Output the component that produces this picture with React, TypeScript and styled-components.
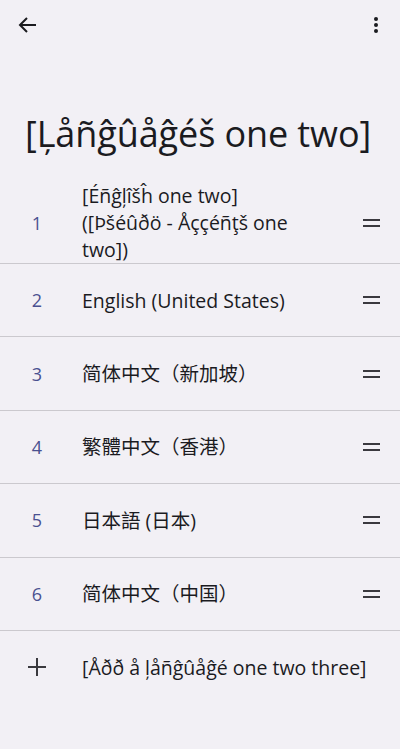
import React from 'react';
import styled, { createGlobalStyle } from 'styled-components';

const GlobalStyle = createGlobalStyle`
  html, body {
    margin: 0;
    padding: 0;
    background: #f2f0f5;
  }
  body {
    font-family: "Open Sans", "Noto Sans CJK SC", sans-serif;
    color: #1b1b1f;
  }
`;

const Page = styled.div`
  width: 400px;
  min-height: 749px;
  background: #f2f0f5;
  display: flex;
  flex-direction: column;
`;

const TopBar = styled.div`
  height: 50px;
  display: flex;
  align-items: center;
  justify-content: space-between;
  padding: 0 12px 0 16px;
`;

const IconButton = styled.button`
  width: 24px;
  height: 24px;
  padding: 0;
  border: none;
  background: transparent;
  display: flex;
  align-items: center;
  justify-content: center;
  color: #1b1b1f;
`;

const Title = styled.h1`
  margin: 0;
  padding: 61px 0 0 25px;
  font-size: 36px;
  line-height: 46px;
  font-weight: 400;
  letter-spacing: -0.1px;
  white-space: nowrap;
`;

const List = styled.div`
  display: flex;
  flex-direction: column;
  margin-top: 25px;
`;

const Row = styled.div<{ $first?: boolean; $last?: boolean }>`
  display: flex;
  align-items: center;
  min-height: ${(p) => (p.$first ? '81px' : '72.4px')};
  border-bottom: ${(p) => (p.$last ? 'none' : '1px solid #cbc9ce')};
  padding: 0 20px 0 0;
`;

const Lead = styled.div`
  width: 74px;
  margin-right: 8px;
  flex-shrink: 0;
  display: flex;
  align-items: center;
  justify-content: center;
`;

const Num = styled.span`
  font-size: 18px;
  color: #4a5190;
`;

const Label = styled.div`
  flex: 1;
  font-size: 19.5px;
  line-height: 27px;
  padding-right: 12px;
  white-space: pre-line;
`;

const Handle = styled.div`
  width: 17px;
  display: flex;
  flex-direction: column;
  gap: 4px;
  span {
    display: block;
    height: 2px;
    background: #3a393e;
  }
`;

const BackIcon = () => (
  <svg width="24" height="24" viewBox="0 0 24 24" fill="none">
    <path d="M20 12H5M11 5l-7 7 7 7" stroke="#1b1b1f" strokeWidth="2" />
  </svg>
);

const MoreIcon = () => (
  <svg width="24" height="24" viewBox="0 0 24 24" fill="#1b1b1f">
    <circle cx="12" cy="6" r="2" />
    <circle cx="12" cy="12" r="2" />
    <circle cx="12" cy="18" r="2" />
  </svg>
);

const PlusIcon = () => (
  <svg width="18" height="18" viewBox="0 0 18 18" fill="none">
    <path d="M9 0v18M0 9h18" stroke="#3a393e" strokeWidth="2" />
  </svg>
);

const languages = [
  '[Éñĝļîšĥ one two]\n([Þšéûðö - Åççéñţš one\ntwo])',
  'English (United States)',
  '简体中文（新加坡）',
  '繁體中文（香港）',
  '日本語 (日本)',
  '简体中文（中国）',
];

export default function App() {
  return (
    <Page>
      <GlobalStyle />
      <TopBar>
        <IconButton aria-label="Back">
          <BackIcon />
        </IconButton>
        <IconButton aria-label="More">
          <MoreIcon />
        </IconButton>
      </TopBar>
      <Title>[Ļåñĝûåĝéš one two]</Title>
      <List>
        {languages.map((lang, i) => (
          <Row key={lang} $first={i === 0}>
            <Lead>
              <Num>{i + 1}</Num>
            </Lead>
            <Label>{lang}</Label>
            <Handle>
              <span />
              <span />
            </Handle>
          </Row>
        ))}
        <Row $last>
          <Lead>
            <PlusIcon />
          </Lead>
          <Label>[Åðð å ļåñĝûåĝé one two three]</Label>
        </Row>
      </List>
    </Page>
  );
}
